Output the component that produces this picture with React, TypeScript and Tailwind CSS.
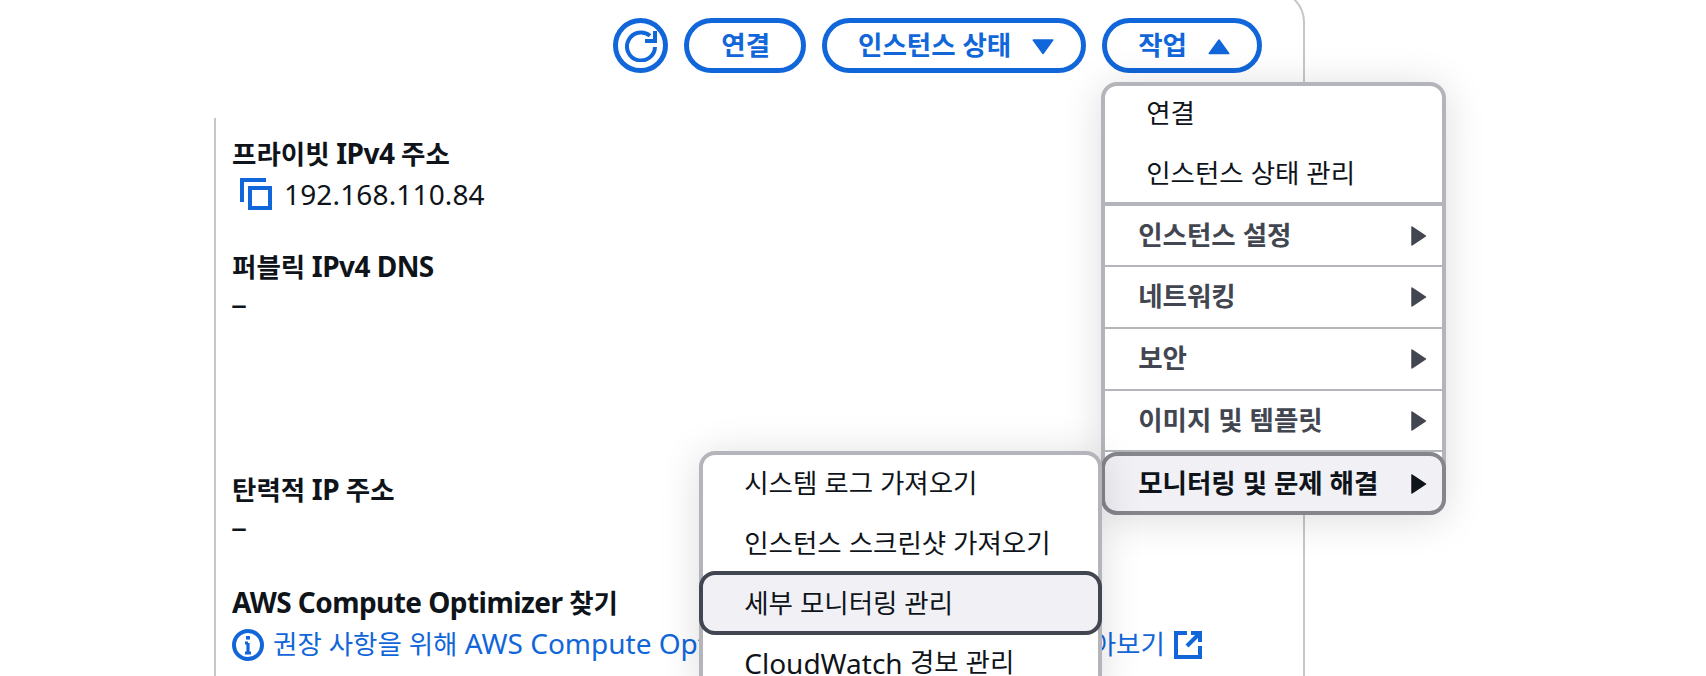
import React from "react";

const font = { fontFamily: '"Noto Sans","Noto Sans CJK KR",sans-serif' };

function K({ children }: { children: React.ReactNode }) {
  return <span className="text-[26.5px] tracking-normal">{children}</span>;
}

function Caret({ dir, className }: { dir: "up" | "down" | "right"; className?: string }) {
  const d =
    dir === "down"
      ? "M1.5 4h13L8 13z"
      : dir === "up"
      ? "M1.5 13h13L8 4z"
      : "M4 2v12L13 8z";
  return (
    <svg viewBox="0 0 16 16" className={className} fill="currentColor" stroke="currentColor" strokeWidth="1" strokeLinejoin="round">
      <path d={d} />
    </svg>
  );
}

function PillButton({ children, className }: { children: React.ReactNode; className?: string }) {
  return (
    <div className={`flex h-[55px] items-center justify-center gap-[20px] rounded-full border-[5px] border-[#1166d9] bg-white text-[26.5px] font-bold text-[#1166d9] ${className ?? "pl-[32px] pr-[31px]"}`}>
      {children}
    </div>
  );
}

function Field({ title, children, className }: { title: React.ReactNode; children: React.ReactNode; className?: string }) {
  return (
    <div className={className}>
      <div className="text-[28px] font-bold leading-[40px] tracking-[-0.55px] text-[#0f141a]">{title}</div>
      <div className="text-[28px] leading-[40px] text-[#0f141a]">{children}</div>
    </div>
  );
}

function Dash() {
  return <div className="-ml-[1px] pb-[6px] text-[32px] font-normal leading-[34px]">–</div>;
}

function PlainItem({ children, className }: { children: React.ReactNode; className?: string }) {
  return (
    <div className={`flex h-[60px] items-center pl-[41px] pt-[3px] text-[26.5px] text-[#0f141a] ${className ?? ""}`}>
      {children}
    </div>
  );
}

function GroupItem({ label, className }: { label: string; className?: string }) {
  return (
    <div className={`flex items-center justify-between border-b-2 border-[#b4b4bb] pl-[33px] pr-[12px] text-[26.5px] font-bold text-[#424650] ${className ?? ""}`}>
      <span>{label}</span>
      <Caret dir="right" className="h-[24px] w-[24px]" />
    </div>
  );
}

export default function App() {
  return (
    <div className="h-[676px] w-[1706px] overflow-hidden bg-white" style={font}>
      <div className="-mt-[10px] h-[800px] w-[1305px] rounded-tr-[32px] border-r-2 border-t-2 border-[#c6c6cd]">
        <div className="flex items-center justify-end gap-[16px] pr-[41px] pt-[26px]">
          <div className="flex h-[55px] w-[55px] items-center justify-center rounded-full border-[5px] border-[#1166d9] text-[#1166d9]">
            <svg viewBox="0 0 16 16" className="h-[32px] w-[32px]" fill="none" stroke="currentColor" strokeWidth="2">
              <path d="M15 8.5a7 7 0 1 1-2.5-5.6" />
              <path d="M15 0.5v5H10" />
            </svg>
          </div>
          <PillButton>연결</PillButton>
          <PillButton className="pl-[31px] pr-[26px]">
            <span>인스턴스 상태</span>
            <Caret dir="down" className="h-[24px] w-[24px]" />
          </PillButton>
          <div className="relative z-20">
            <PillButton className="pl-[31px] pr-[26px]">
              <span>작업</span>
              <Caret dir="up" className="h-[24px] w-[24px]" />
            </PillButton>
            <div className="absolute -left-[1px] top-[64px] w-[345px] rounded-[16px] border-4 border-[#b4b4bb] bg-white shadow-[0_4px_40px_rgba(0,7,22,0.14)]">
              <div className="-mt-[4px]">
                <PlainItem>연결</PlainItem>
                <PlainItem>인스턴스 상태 관리</PlainItem>
              </div>
              <div className="h-[4px] bg-[#b4b4bb]" />
              <GroupItem label="인스턴스 설정" className="h-[61px]" />
              <GroupItem label="네트워킹" className="h-[62px]" />
              <GroupItem label="보안" className="h-[62px]" />
              <GroupItem label="이미지 및 템플릿" className="h-[61px]" />
              <div className="relative -mx-[4px] -mb-[4px] flex h-[63px] items-center justify-between rounded-[16px] border-4 border-[#85858c] bg-[#f0f0f5] pl-[33px] pr-[12px] text-[26.5px] font-bold text-[#0f141a]">
                <span>모니터링 및 문제 해결</span>
                <Caret dir="right" className="h-[24px] w-[24px]" />
                <div className="absolute -top-[5px] right-[calc(100%+3px)] w-[403px] rounded-[16px] border-4 border-[#b4b4bb] bg-white font-normal shadow-[0_4px_40px_rgba(0,7,22,0.14)]">
                  <div className="-mt-[3px]">
                    <PlainItem>시스템 로그 가져오기</PlainItem>
                    <PlainItem>인스턴스 스크린샷 가져오기</PlainItem>
                  </div>
                  <div className="-mx-[4px] -mt-[1px] flex h-[64px] items-center rounded-[16px] border-4 border-[#424650] bg-[#f0f0f5] pl-[41px] pt-[1px] text-[26.5px] text-[#0f141a]">
                    세부 모니터링 관리
                  </div>
                  <PlainItem className="!h-[52px]">
                    <span className="text-[28px]">CloudWatch&nbsp;</span>경보 관리
                  </PlainItem>
                </div>
              </div>
            </div>
          </div>
        </div>

        <div className="ml-[214px] mt-[45px] h-[700px] border-l-2 border-[#c6c6cd] pl-[16px] pt-[15px]">
          <Field title={<><K>프라이빗</K> IPv4 <K>주소</K></>}>
            <div className="flex items-center">
              <svg viewBox="0 0 16 16" className="ml-[8px] mr-[12px] h-[32px] w-[32px] text-[#1166d9]" fill="none" stroke="currentColor" strokeWidth="2">
                <path d="M1 12V1h12" />
                <rect x="5" y="5" width="10" height="10" />
              </svg>
              <span className="tracking-[0.15px]">192.168.110.84</span>
            </div>
          </Field>
          <Field title={<><K>퍼블릭</K> IPv4 DNS</>} className="mt-[32px]"><Dash /></Field>
          <Field title={<><K>탄력적</K> IP <K>주소</K></>} className="mt-[142px]"><Dash /></Field>
          <Field title={<>AWS Compute Optimizer <K>찾기</K></>} className="mt-[32px]">
            <div className="flex w-[972px] items-center text-[#1166d9]">
              <svg viewBox="0 0 16 16" className="mr-[9px] h-[32px] w-[32px] shrink-0" fill="none" stroke="currentColor" strokeWidth="2">
                <circle cx="8" cy="8" r="7" />
                <path d="M8 7v5M6.5 12h3M6.5 7H8" strokeWidth="1.6" />
                <path d="M7 3.5h2v1.8H7z" fill="currentColor" stroke="none" />
              </svg>
              <span className="whitespace-nowrap pb-[2px]"><K>권장 사항을 위해</K> AWS Compute Optimizer<K>에 옵트인한 후 자세히 더 알아보기</K></span>
              <svg viewBox="0 0 16 16" className="ml-auto h-[32px] w-[32px] shrink-0" fill="none" stroke="currentColor" strokeWidth="2">
                <path d="M14 8.5V14H2V2h5.5" />
                <path d="M9.5 2H14v4.5" />
                <path d="M14 2 7.5 8.5" />
              </svg>
            </div>
          </Field>
        </div>
      </div>
    </div>
  );
}
